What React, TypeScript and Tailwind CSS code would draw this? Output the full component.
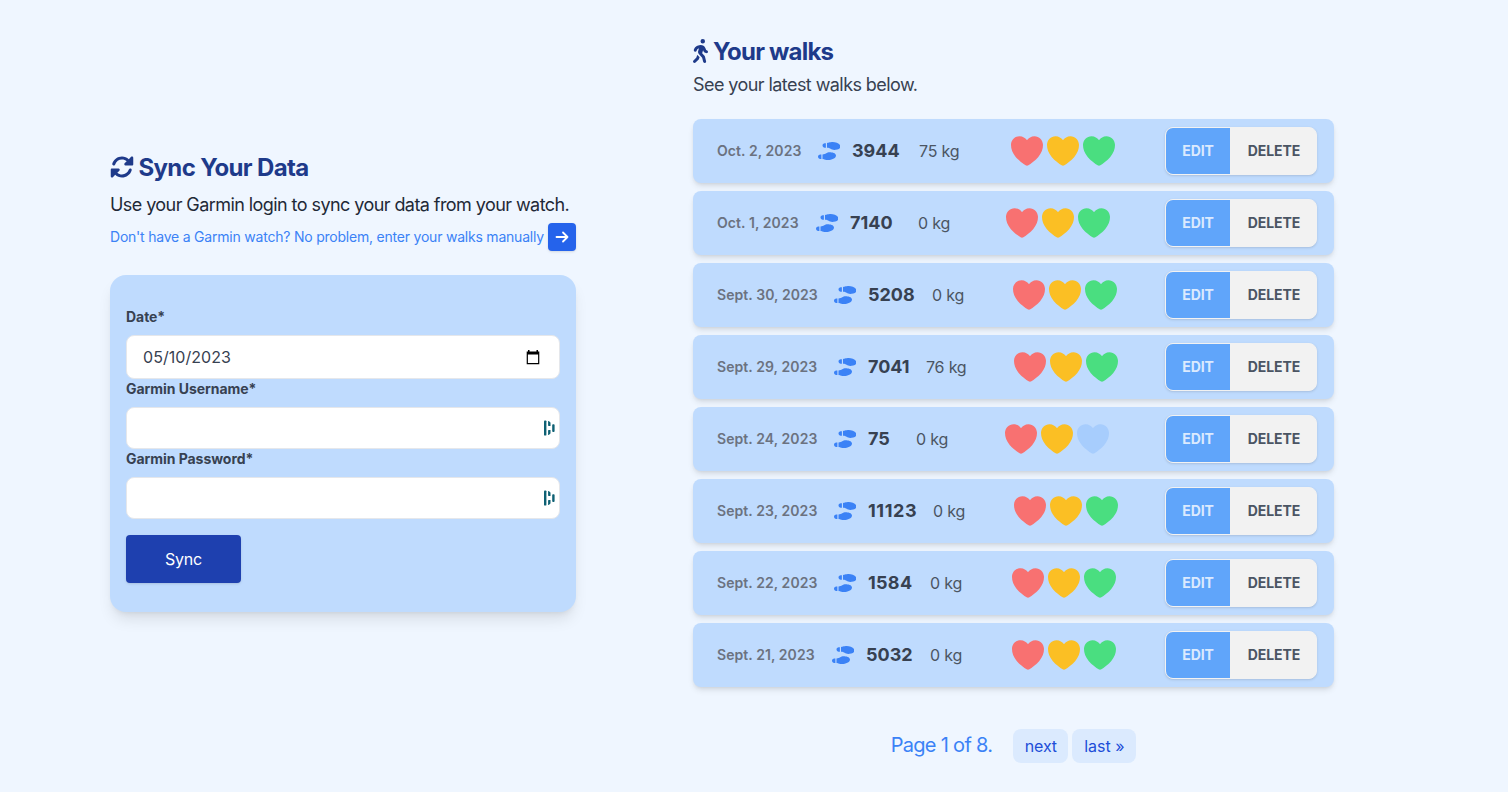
import { FaPersonWalking, FaShoePrints } from "react-icons/fa6";

const HEART =
  "M100 184.606a15.384 15.384 0 0 1-8.653-2.678C53.565 156.28 37.205 138.695 28.182 127.7 8.952 104.264-.254 80.202.005 54.146.308 24.287 24.264 0 53.406 0c21.192 0 35.869 11.937 44.416 21.879a2.884 2.884 0 0 0 4.356 0C110.725 11.927 125.402 0 146.594 0c29.142 0 53.098 24.287 53.4 54.151.26 26.061-8.956 50.122-28.176 73.554-9.023 10.994-25.383 28.58-63.165 54.228a15.384 15.384 0 0 1-8.653 2.673Z";

const ROTATE =
  "M449.9 39.96l-48.5 48.53C362.5 53.19 311.4 32 256 32C161.5 32 78.59 92.34 49.58 182.2c-5.438 16.81 3.797 34.88 20.61 40.28c16.97 5.5 34.86-3.812 40.3-20.59C130.9 138.5 189.4 96 256 96c37.96 0 73 14.18 100.2 37.8L311.1 178C295.1 194.8 306.8 223.4 330.4 224h146.9C487.7 223.7 496 215.3 496 204.9V59.04C496 34.99 466.9 22.95 449.9 39.96zM441.8 289.6c-16.94-5.438-34.88 3.812-40.3 20.59C381.1 373.5 322.6 416 256 416c-37.96 0-73-14.18-100.2-37.8L200 334C216.9 317.2 205.2 288.6 181.6 288H34.66C24.32 288.3 16 296.7 16 307.1v145.9c0 24.04 29.07 36.08 46.07 19.07l48.5-48.53C149.5 459.7 200.6 480 255.1 480c94.45 0 177.4-60.34 206.4-150.2C467.9 313 458.6 294.1 441.8 289.6z";

type Walk = {
  date: string;
  steps: number;
  weight: number;
  hearts: number;
  dateW: string;
  stepsW: string;
  weightW: string;
};

const walks: Walk[] = [
  { date: "Oct. 2, 2023", steps: 3944, weight: 75, hearts: 3, dateW: "w-[101px]", stepsW: "w-[67px]", weightW: "w-[92px]" },
  { date: "Oct. 1, 2023", steps: 7140, weight: 0, hearts: 3, dateW: "w-[99px]", stepsW: "w-[68px]", weightW: "w-[88px]" },
  { date: "Sept. 30, 2023", steps: 5208, weight: 0, hearts: 3, dateW: "w-[117px]", stepsW: "w-[64px]", weightW: "w-[81px]" },
  { date: "Sept. 29, 2023", steps: 7041, weight: 76, hearts: 3, dateW: "w-[117px]", stepsW: "w-[58px]", weightW: "w-[88px]" },
  { date: "Sept. 24, 2023", steps: 75, weight: 0, hearts: 2, dateW: "w-[117px]", stepsW: "w-[48px]", weightW: "w-[89px]" },
  { date: "Sept. 23, 2023", steps: 11123, weight: 0, hearts: 3, dateW: "w-[117px]", stepsW: "w-[65px] tracking-[0.6px]", weightW: "w-[81px]" },
  { date: "Sept. 22, 2023", steps: 1584, weight: 0, hearts: 3, dateW: "w-[117px]", stepsW: "w-[62px] tracking-[0.3px]", weightW: "w-[82px]" },
  { date: "Sept. 21, 2023", steps: 5032, weight: 0, hearts: 3, dateW: "w-[115px]", stepsW: "w-[64px]", weightW: "w-[82px]" },
];

const heartColors = ["text-[#f87171]", "text-[#fbbf24]", "text-[#4ade80]"];

function Hearts({ count }: { count: number }) {
  return (
    <div className="flex gap-1">
      {heartColors.map((color, i) => (
        <svg key={color} viewBox="0 0 200 185" className={`h-[30px] w-8 ${i < count ? color : "text-[#60a5fa]/25"}`} fill="currentColor">
          <path d={HEART} />
        </svg>
      ))}
    </div>
  );
}

function WalkRow({ walk }: { walk: Walk }) {
  return (
    <li className="flex h-16 items-center rounded-lg bg-[#bfdbfe] pl-6 pr-[17px] shadow-md">
      <span className={`shrink-0 text-sm font-semibold tracking-[0.07px] text-[#6b7280] ${walk.dateW}`}>{walk.date}</span>
      <FaShoePrints className="mr-3 -ml-[0.5px] h-[18px] w-[22.5px] shrink-0 text-[#3b82f6]" />
      <span className={`shrink-0 text-lg font-bold text-[#374151] ${walk.stepsW}`}>{walk.steps}</span>
      <span className={`shrink-0 text-base tracking-[-0.2px] text-[#4b5563] ${walk.weightW}`}>{walk.weight} kg</span>
      <Hearts count={walk.hearts} />
      <div className="ml-auto flex h-12 overflow-hidden rounded-lg border border-[#f2f2f2] bg-[#f2f2f2] text-sm font-bold tracking-[-0.1px] shadow-sm">
        <button className="w-16 bg-[#60a5fa] text-[#dbeafe]">EDIT</button>
        <button className="w-[86px] pl-0.5 text-[#4b5563]">DELETE</button>
      </div>
    </li>
  );
}

function ManagerMark() {
  return (
    <svg viewBox="0 0 11 16" className="h-4 w-[11px] text-[#0e6073]" fill="currentColor">
      <rect x="0" y="0.4" width="2.4" height="15.2" rx="0.9" />
      <path d="M4.100 1.300Q4.100 .8 4.600 1L6 2Q6.500 2.300 6.500 3V5.900H4.600Q4.100 5.900 4.100 5.300Z" />
      <path d="M4.100 14.700Q4.100 15.200 4.600 15L6 14Q6.500 13.700 6.500 13V10.100H4.600Q4.100 10.100 4.100 10.700Z" />
      <rect x="8.200" y="4.200" width="2.400" height="7.800" rx="0.9" />
    </svg>
  );
}

function Label({ children }: { children: string }) {
  return <label className="mb-2 block text-sm leading-5 font-bold tracking-[-0.05px] text-[#374151]">{children}</label>;
}

export default function App() {
  return (
    <main className="flex h-[792px] w-[1508px] overflow-hidden bg-[#eff6ff] font-['Inter',sans-serif]">
      <section className="ml-[110px] flex w-[466px] flex-col pt-[152px]">
        <h1 className="flex items-center gap-[4.5px] text-2xl font-bold tracking-[-0.65px] text-[#1e3a8a]">
          <svg viewBox="0 0 512 512" className="-mt-0.5 size-6" fill="currentColor">
            <path d={ROTATE} />
          </svg>
          <span className="whitespace-nowrap">Sync Your Data</span>
        </h1>
        <p className="mt-[7px] whitespace-nowrap text-lg tracking-[-0.57px] text-[#1f2937]">Use your Garmin login to sync your data from your watch.</p>
        <div className="mt-1 flex items-center justify-between text-sm text-[#3b82f6]">
          <span className="whitespace-nowrap tracking-[-0.215px]">Don't have a Garmin watch? No problem, enter your walks manually</span>
          <button className="flex size-7 shrink-0 items-center justify-center rounded-sm bg-[#2563eb] text-white shadow-sm">
            <svg viewBox="0 0 16 16" className="size-4" fill="none" stroke="currentColor" strokeWidth="1.8" strokeLinecap="round" strokeLinejoin="round">
              <path d="M2.500 8h11M9 3.500 13.500 8 9 12.500" />
            </svg>
          </button>
        </div>
        <form className="mt-6 h-[337px] rounded-2xl bg-[#bfdbfe] px-4 pt-8 shadow-lg">
          <Label>Date*</Label>
          <div className="flex h-11 items-center justify-between rounded-lg border border-[#e5e7eb] bg-white pr-[19px] pl-4 text-[#374151]">
            <span className="tracking-[0.05px]">05/10/2023</span>
            <svg viewBox="0 0 14 15" className="h-[15px] w-[14px] text-black" fill="currentColor">
              <path fillRule="evenodd" d="M2 0h1.500v1.500h7V0H12v1.500h1.300V14.300H.7V1.500H2ZM1.900 4.500v8.500h10.200V4.500Z" />
            </svg>
          </div>
          <Label>Garmin Username*</Label>
          <div className="flex h-[42px] items-center justify-end rounded-lg border border-[#e5e7eb] bg-white pr-1"><ManagerMark /></div>
          <Label>Garmin Password*</Label>
          <div className="flex h-[42px] items-center justify-end rounded-lg border border-[#e5e7eb] bg-white pr-1"><ManagerMark /></div>
          <button className="mt-4 h-12 w-[115px] rounded-sm bg-[#1e40af] text-base tracking-[-0.2px] text-white shadow-sm">Sync</button>
        </form>
      </section>
      <section className="ml-[117px] flex w-[641px] flex-col pt-9">
        <h2 className="flex items-center gap-[5px] text-2xl font-bold tracking-[-0.8px] text-[#1e3a8a]">
          <FaPersonWalking className="-mt-0.5 h-6 w-[15px]" />
          <span>Your walks</span>
        </h2>
        <p className="mt-[3px] text-lg tracking-[-0.57px] text-[#374151]">See your latest walks below.</p>
        <ul className="mt-5 flex flex-col gap-2">
          {walks.map((walk) => (
            <WalkRow key={walk.date} walk={walk} />
          ))}
        </ul>
        <nav className="mt-[42px] flex items-center justify-center">
          <span className="mr-[21px] -mt-0.5 text-xl tracking-[-0.7px] text-[#3b82f6]">Page 1 of 8.</span>
          <a className="mr-1 flex h-[34px] w-[55px] items-center justify-center rounded-lg bg-[#dbeafe] tracking-[-0.2px] text-[#1d4ed8]">next</a>
          <a className="flex h-[34px] w-16 items-center justify-center rounded-lg bg-[#dbeafe] text-[#1d4ed8]">last »</a>
        </nav>
      </section>
    </main>
  );
}
